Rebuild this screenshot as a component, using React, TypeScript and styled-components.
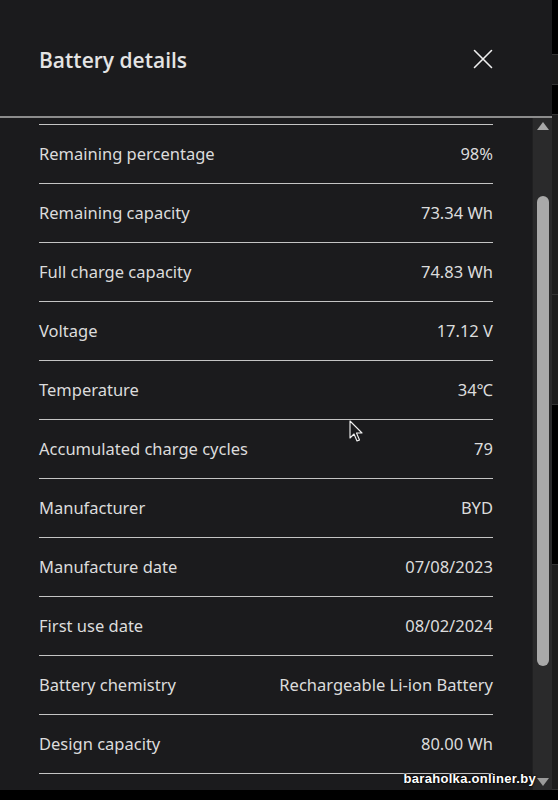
import React from "react";
import styled, { createGlobalStyle } from "styled-components";

const Global = createGlobalStyle`
  html, body { margin: 0; padding: 0; background: #000; }
  body { font-family: "Noto Sans", "Open Sans", sans-serif; }
  *, *::before, *::after { box-sizing: border-box; }
`;

const Screen = styled.div`
  position: relative;
  width: 558px;
  height: 800px;
  display: flex;
  background: #000;
  overflow: hidden;
`;

const Panel = styled.div`
  width: 552px;
  height: 790px;
  background: #1b1b1d;
  display: flex;
  flex-direction: column;
`;

const BackStrip = styled.div`
  width: 6px;
  height: 790px;
  display: flex;
  flex-direction: column;
`;

const StripPart = styled.div<{ $h: number; $c: string }>`
  height: ${(p) => p.$h}px;
  background: ${(p) => p.$c};
  border-bottom: 1px solid #333;
`;

const Header = styled.header`
  height: 118px;
  flex-shrink: 0;
  display: flex;
  align-items: center;
  justify-content: space-between;
  padding: 2px 59px 0 39px;
  border-bottom: 2px solid #8c8c8c;
`;

const Title = styled.h1`
  margin: 0;
  font-family: "Open Sans", sans-serif;
  font-weight: 600;
  font-size: 21px;
  color: #e4e4e4;
  padding-top: 1px;
`;

const CloseBtn = styled.button`
  background: none;
  border: none;
  padding: 0;
  width: 20px;
  height: 20px;
  display: flex;
  align-items: center;
  justify-content: center;
  cursor: pointer;
`;

const Body = styled.div`
  flex: 1;
  display: flex;
  min-height: 0;
`;

const Content = styled.div`
  flex: 1;
  padding: 6px 39px 0 39px;
  overflow: hidden;
`;

const Row = styled.div`
  height: 59px;
  border-top: 1px solid #c4c4c4;
  display: flex;
  align-items: center;
  justify-content: space-between;
  font-size: 16.5px;
  color: #dcdcdc;
  padding-bottom: 1px;
  &:last-child { border-bottom: 1px solid #c4c4c4; height: 60px; }
`;

const Label = styled.span``;
const Value = styled.span``;

const Track = styled.div`
  width: 20px;
  background: #2a2a2b;
  display: flex;
  flex-direction: column;
  align-items: center;
  border-left: 1px solid #202021;
`;

const Arrow = styled.div<{ $down?: boolean }>`
  width: 0;
  height: 0;
  border-left: 6px solid transparent;
  border-right: 6px solid transparent;
  ${(p) =>
    p.$down
      ? "border-top: 8px solid #9a9a9a; margin: 0 0 4px;"
      : "border-bottom: 8px solid #a8a8a8; margin: 4px 0 0;"}
`;

const Spacer = styled.div<{ $h?: number }>`
  ${(p) => (p.$h ? `height: ${p.$h}px;` : "flex: 1;")}
`;

const Thumb = styled.div`
  width: 12px;
  height: 470px;
  background: #a9a9a9;
  border-radius: 6px;
`;

const Pointer = styled.svg`
  position: absolute;
  left: 349px;
  top: 420px;
`;

const Watermark = styled.div`
  position: absolute;
  right: 22px;
  bottom: 14px;
  font-family: "Liberation Sans", Arial, sans-serif;
  font-weight: 700;
  font-size: 13px;
  letter-spacing: 0.3px;
  color: #fff;
  text-shadow: 0 0 2px #000, 0 0 2px #000;
`;

const rows: [string, string][] = [
  ["Remaining percentage", "98%"],
  ["Remaining capacity", "73.34 Wh"],
  ["Full charge capacity", "74.83 Wh"],
  ["Voltage", "17.12 V"],
  ["Temperature", "34℃"],
  ["Accumulated charge cycles", "79"],
  ["Manufacturer", "BYD"],
  ["Manufacture date", "07/08/2023"],
  ["First use date", "08/02/2024"],
  ["Battery chemistry", "Rechargeable Li-ion Battery"],
  ["Design capacity", "80.00 Wh"],
];

export default function App() {
  return (
    <>
      <Global />
      <Screen>
        <Panel>
          <Header>
            <Title>Battery details</Title>
            <CloseBtn aria-label="Close">
              <svg width="20" height="20" viewBox="0 0 20 20">
                <path d="M1.5 1.5 L18.5 18.5 M18.5 1.5 L1.5 18.5" stroke="#f0f0f0" strokeWidth="1.6" strokeLinecap="round" />
              </svg>
            </CloseBtn>
          </Header>
          <Body>
            <Content>
              {rows.map(([l, v]) => (
                <Row key={l}>
                  <Label>{l}</Label>
                  <Value>{v}</Value>
                </Row>
              ))}
            </Content>
            <Track>
              <Arrow />
              <Spacer $h={66} />
              <Thumb />
              <Spacer />
              <Arrow $down />
            </Track>
          </Body>
        </Panel>
        <BackStrip>
          <StripPart $h={55} $c="#000" />
          <StripPart $h={30} $c="#1a1a1a" />
          <StripPart $h={30} $c="#000" />
          <StripPart $h={180} $c="#1d1d1d" />
          <StripPart $h={110} $c="#1c1c1c" />
          <StripPart $h={160} $c="#000" />
          <StripPart $h={225} $c="#1c1c1c" />
        </BackStrip>
        <Pointer width="14" height="24" viewBox="0 0 14 24">
          <path d="M1 1 L1 18 L5 14 L8 21 L10.5 20 L7.5 13 L13 13 Z" fill="#1b1b1d" stroke="#f2f2f2" strokeWidth="1.1" strokeLinejoin="round" />
        </Pointer>
        <Watermark>baraholka.onliner.by</Watermark>
      </Screen>
    </>
  );
}
